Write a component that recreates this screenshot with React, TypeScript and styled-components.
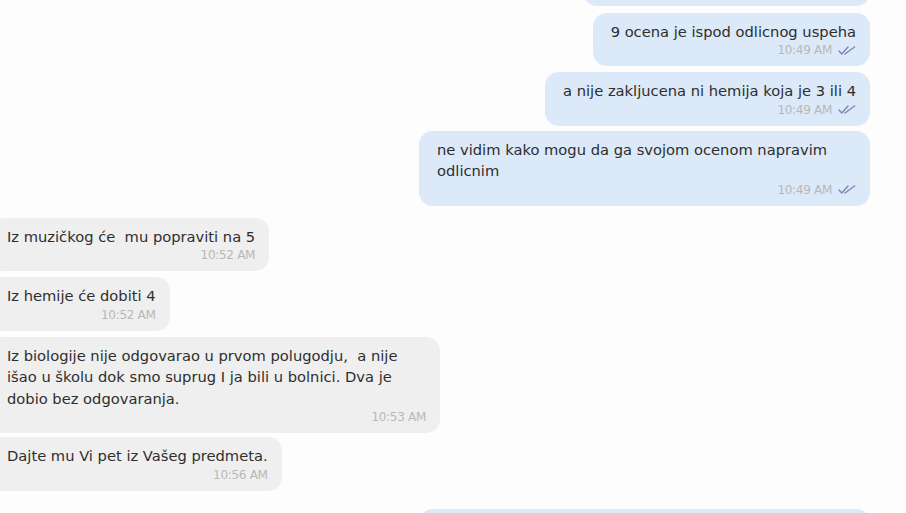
import React from "react";
import styled, { createGlobalStyle } from "styled-components";

const Global = createGlobalStyle`
  html, body {
    margin: 0;
    padding: 0;
    background: #fdfdfd;
    overflow: hidden;
  }
  body {
    font-family: "DejaVu Sans", "Open Sans", sans-serif;
    color: #333;
  }
`;

const Page = styled.div`
  width: 906px;
  height: 513px;
  overflow: hidden;
  display: flex;
  flex-direction: column;
`;

const Row = styled.div<{ $out: boolean; $gap: number }>`
  display: flex;
  justify-content: ${(p) => (p.$out ? "flex-end" : "flex-start")};
  margin-top: ${(p) => p.$gap}px;
  padding-right: ${(p) => (p.$out ? 36 : 0)}px;
  margin-left: ${(p) => (p.$out ? 0 : -11)}px;
  flex-shrink: 0;
`;

const Bubble = styled.div<{ $out: boolean; $wide?: boolean }>`
  box-sizing: border-box;
  max-width: 451px;
  width: ${(p) => (p.$wide ? "451px" : "auto")};
  background: ${(p) => (p.$out ? "#dbe9f9" : "#efefef")};
  border-radius: 14px;
  padding: 8px 14px 8px 18px;
  display: flex;
  flex-direction: column;
`;

const Text = styled.div`
  font-size: 14.7px;
  line-height: 21.5px;
  color: #2e2e2e;
  white-space: pre;
`;

const Meta = styled.div`
  display: flex;
  justify-content: flex-end;
  align-items: center;
  gap: 6px;
  height: 16px;
  font-size: 12px;
  letter-spacing: -0.3px;
  color: #b8b8b8;
`;

const Check = () => (
  <svg width="18" height="9" viewBox="0 0 18 9" fill="none">
    <path d="M1 5 L3.8 8 L10 1" stroke="#8487b8" strokeWidth="1.5" strokeLinecap="round" strokeLinejoin="round" />
    <path d="M7 8 L16.5 1" stroke="#8487b8" strokeWidth="1.5" strokeLinecap="round" />
  </svg>
);

type Msg = {
  out: boolean;
  gap: number;
  lines: string[];
  time: string;
  wide?: boolean;
};

const messages: Msg[] = [
  { out: true, gap: -48, lines: ["ima devet ocena, a nije zakljucena"], time: "10:48 AM" },
  { out: true, gap: 7, lines: ["9 ocena je ispod odlicnog uspeha"], time: "10:49 AM" },
  { out: true, gap: 6, lines: ["a nije zakljucena ni hemija koja je 3 ili 4"], time: "10:49 AM" },
  {
    out: true,
    gap: 5,
    wide: true,
    lines: ["ne vidim kako mogu da ga svojom ocenom napravim", "odlicnim"],
    time: "10:49 AM",
  },
  { out: false, gap: 12, lines: ["Iz muzičkog će  mu popraviti na 5"], time: "10:52 AM" },
  { out: false, gap: 6, lines: ["Iz hemije će dobiti 4"], time: "10:52 AM" },
  {
    out: false,
    gap: 6,
    wide: true,
    lines: [
      "Iz biologije nije odgovarao u prvom polugodju,  a nije",
      "išao u školu dok smo suprug I ja bili u bolnici. Dva je",
      "dobio bez odgovaranja.",
    ],
    time: "10:53 AM",
  },
  { out: false, gap: 4, lines: ["Dajte mu Vi pet iz Vašeg predmeta."], time: "10:56 AM" },
  {
    out: true,
    gap: 18,
    wide: true,
    lines: ["ja ne mogu da mu dam pet ako nije odgovarao", "iz mog predmeta"],
    time: "10:58 AM",
  },
];

export default function App() {
  return (
    <>
      <Global />
      <Page>
        {messages.map((m, i) => (
          <Row key={i} $out={m.out} $gap={m.gap}>
            <Bubble $out={m.out} $wide={m.wide}>
              {m.lines.map((l, j) => (
                <Text key={j}>{l}</Text>
              ))}
              <Meta>
                <span>{m.time}</span>
                {m.out && <Check />}
              </Meta>
            </Bubble>
          </Row>
        ))}
      </Page>
    </>
  );
}
